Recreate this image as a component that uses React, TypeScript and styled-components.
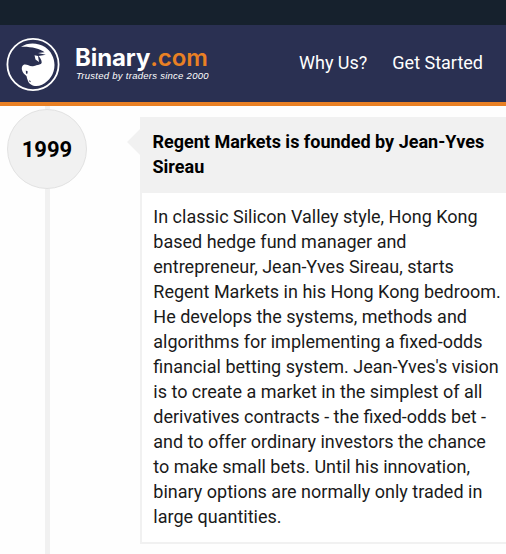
import React from 'react';
import styled, { createGlobalStyle } from 'styled-components';

const GlobalStyle = createGlobalStyle`
  * { box-sizing: border-box; }
  body { margin: 0; background: #fefefe; font-family: Roboto, "Liberation Sans", sans-serif; color: #000; overflow: hidden; }
`;
const Page = styled.div`
  display: flex; flex-direction: column; width: 506px; height: 554px; overflow: hidden;
`;
const TopBar = styled.div`
  flex: none; height: 25px; background: #16212d;
`;
const Header = styled.header`
  flex: none; display: flex; align-items: flex-start; height: 81px;
  background: #2a3052; border-bottom: 4px solid #e98024;
`;
const Emblem = styled.svg`
  flex: none; display: block; width: 54px; height: 54px; margin: 12px 0 0 6px;
`;
const Brand = styled.div`
  flex: none; width: 223px; padding: 20px 0 0 15px; white-space: nowrap; color: #fff;
`;
const BrandName = styled.div`
  font: 700 24px/25px Inter, sans-serif; letter-spacing: -0.1px;
`;
const Suffix = styled.span`
  color: #e98024; font-weight: 600;
`;
const Tagline = styled.div`
  font: italic 400 9.5px/12px "Liberation Sans", sans-serif; letter-spacing: 0.27px; padding-left: 1px;
`;
const Nav = styled.nav`
  display: flex; gap: 25px; padding: 25px 0 0 16px;
`;
const NavLink = styled.a`
  color: #fff; font-size: 18px; line-height: 25px; white-space: nowrap;
`;
const Timeline = styled.main`
  flex: 1; display: flex; align-items: flex-start;
`;
const Rail = styled.div`
  flex: none; display: flex; flex-direction: column; align-items: center; width: 80px; height: 448px; margin-left: 7px;
`;
const Track = styled.div<{ $length?: number }>`
  width: 5px; ${p => (p.$length ? `flex: none; height: ${p.$length}px;` : 'flex: 1;')} background: #f1f1f1;
`;
const Year = styled.div`
  flex: none; display: flex; align-items: center; justify-content: center; width: 80px; height: 80px;
  border: 1.5px solid #e2e2e2; border-radius: 50%; background: #f1f1f1;
  font-size: 22px; font-weight: 700;
`;
const Arrow = styled.svg`
  flex: none; display: block; width: 13px; height: 26px; margin: 23px 0 0 40px;
`;
const Card = styled.article`
  flex: none; width: 400px; height: 427px; margin-top: 11px; border: solid #f1f1f1; border-width: 0 2px 2px 2px; background: #fff;
`;
const CardTitle = styled.h2`
  margin: 0; height: 76px; padding: 12px 0 0 10.5px; background: #f1f1f1;
  font-size: 18px; line-height: 25px; font-weight: 700; white-space: nowrap;
`;
const CardText = styled.p`
  margin: 0; padding: 11px 0 0 11.3px; color: #1a1a1a; font-size: 18px; line-height: 25px; font-weight: 400; white-space: nowrap;
`;
const Line = styled.span`
  display: block;
`;

const title = ['Regent Markets is founded by Jean-Yves', 'Sireau'];
const story = [
  'In classic Silicon Valley style, Hong Kong',
  'based hedge fund manager and',
  'entrepreneur, Jean-Yves Sireau, starts',
  'Regent Markets in his Hong Kong bedroom.',
  'He develops the systems, methods and',
  'algorithms for implementing a fixed-odds',
  "financial betting system. Jean-Yves's vision",
  'is to create a market in the simplest of all',
  'derivatives contracts - the fixed-odds bet -',
  'and to offer ordinary investors the chance',
  'to make small bets. Until his innovation,',
  'binary options are normally only traded in',
  'large quantities.',
];

export default function App() {
  return (
    <Page>
      <GlobalStyle />
      <TopBar />
      <Header>
        <Emblem viewBox="0 0 54 54">
          <circle cx="27" cy="27.5" r="25.6" fill="none" stroke="#fff" strokeWidth="1.8" />
          <path fill="#fff" d="M15 9.8C22 5 32 5.5 39 10C45 14 48.5 21 48.5 28C48.5 37 43.5 44 36 47.8C32 49.5 28 49.5 25 47.5C22 46 21.3 42 20.5 39C18.5 37.5 16.7 36 16 33C15.4 30 16.5 27.5 19 27.5C22 27.5 24 30 28 29C31 28 35.5 27.8 35.7 25.5C35.8 23 34 20.5 32.5 19L39.8 17.8L32 16L38.5 15.2C34 11.5 24 9.3 15 9.8Z" />
          <path fill="#fff" d="M28.5 18.3L32 19L33 25L29.5 22.5Z" />
          <path fill="#2a3052" d="M19.8 33.5L21.8 34.5L21.2 37L20 36.5ZM23.5 43L24.8 44.5L24.2 45.3L23.3 44.5Z" />
        </Emblem>
        <Brand>
          <BrandName>Binary<Suffix>.com</Suffix></BrandName>
          <Tagline>Trusted by traders since 2000</Tagline>
        </Brand>
        <Nav>
          <NavLink>Why Us?</NavLink>
          <NavLink>Get Started</NavLink>
        </Nav>
      </Header>
      <Timeline>
        <Rail>
          <Track $length={3} />
          <Year>1999</Year>
          <Track />
        </Rail>
        <Arrow viewBox="0 0 13 26"><path d="M13 0V26L0 13Z" fill="#f1f1f1" /></Arrow>
        <Card>
          <CardTitle>{title.map(t => <Line key={t}>{t}</Line>)}</CardTitle>
          <CardText>{story.map(t => <Line key={t}>{t}</Line>)}</CardText>
        </Card>
      </Timeline>
    </Page>
  );
}
